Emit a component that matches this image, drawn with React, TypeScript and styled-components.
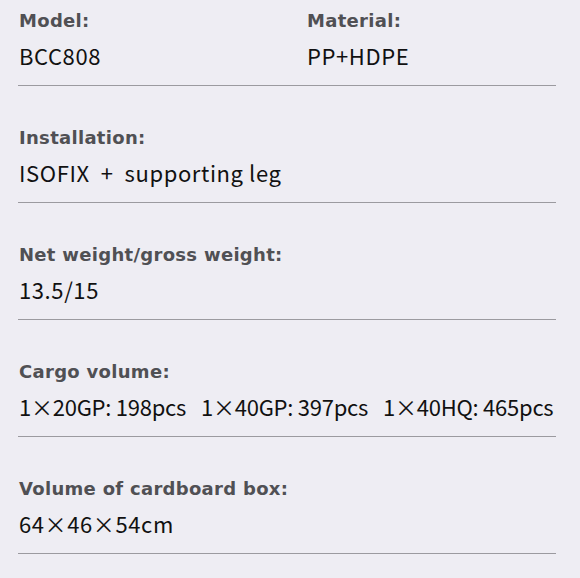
import styled, { createGlobalStyle } from "styled-components";

type Spec = {
  label: string;
  value: string[];
};

const rows: Spec[][] = [
  [
    { label: "Model:", value: ["BCC808"] },
    { label: "Material:", value: ["PP+HDPE"] },
  ],
  [{ label: "Installation:", value: ["ISOFIX  +  supporting leg"] }],
  [{ label: "Net weight/gross weight:", value: ["13.5/15"] }],
  [
    {
      label: "Cargo volume:",
      value: ["1×20GP: 198pcs", "1×40GP: 397pcs", "1×40HQ: 465pcs"],
    },
  ],
  [{ label: "Volume of cardboard box:", value: ["64×46×54cm"] }],
];

export default function App() {
  return (
    <>
      <GlobalStyle />
      <Page>
        {rows.map((row, i) => (
          <Row key={i}>
            {row.map((spec) => (
              <Cell key={spec.label}>
                <Label>{spec.label}</Label>
                <Value $tight={spec.value.length > 1}>
                  {spec.value.map((part) => (
                    <span key={part}>{part}</span>
                  ))}
                </Value>
              </Cell>
            ))}
          </Row>
        ))}
      </Page>
    </>
  );
}

const GlobalStyle = createGlobalStyle`
  html, body {
    margin: 0;
    background: #eeedf3;
  }
`;

const Page = styled.div`
  width: 580px;
  min-height: 578px;
  padding: 8px 24px 0 18px;
  box-sizing: border-box;
  display: flex;
  flex-direction: column;
`;

const Row = styled.div`
  display: grid;
  grid-template-columns: 288px 1fr;
  flex-shrink: 0;
  border-bottom: 1.5px solid #9b9a9f;
  margin-bottom: 39px;
  height: 78px;
  box-sizing: border-box;
`;

const Cell = styled.div`
  display: flex;
  flex-direction: column;
  padding-left: 1px;
`;

const Label = styled.div`
  font-family: "DejaVu Sans", sans-serif;
  font-weight: 700;
  font-size: 18px;
  letter-spacing: 0.3px;
  line-height: 26px;
  color: #505054;
  white-space: nowrap;
`;

const Value = styled.div<{ $tight: boolean }>`
  display: flex;
  gap: 15px;
  margin-top: 4px;
  font-family: "Noto Sans CJK SC", sans-serif;
  font-size: 22px;
  letter-spacing: ${(p) => (p.$tight ? "-0.25px" : "0.6px")};
  line-height: 34px;
  color: #111;
  white-space: pre;
`;
